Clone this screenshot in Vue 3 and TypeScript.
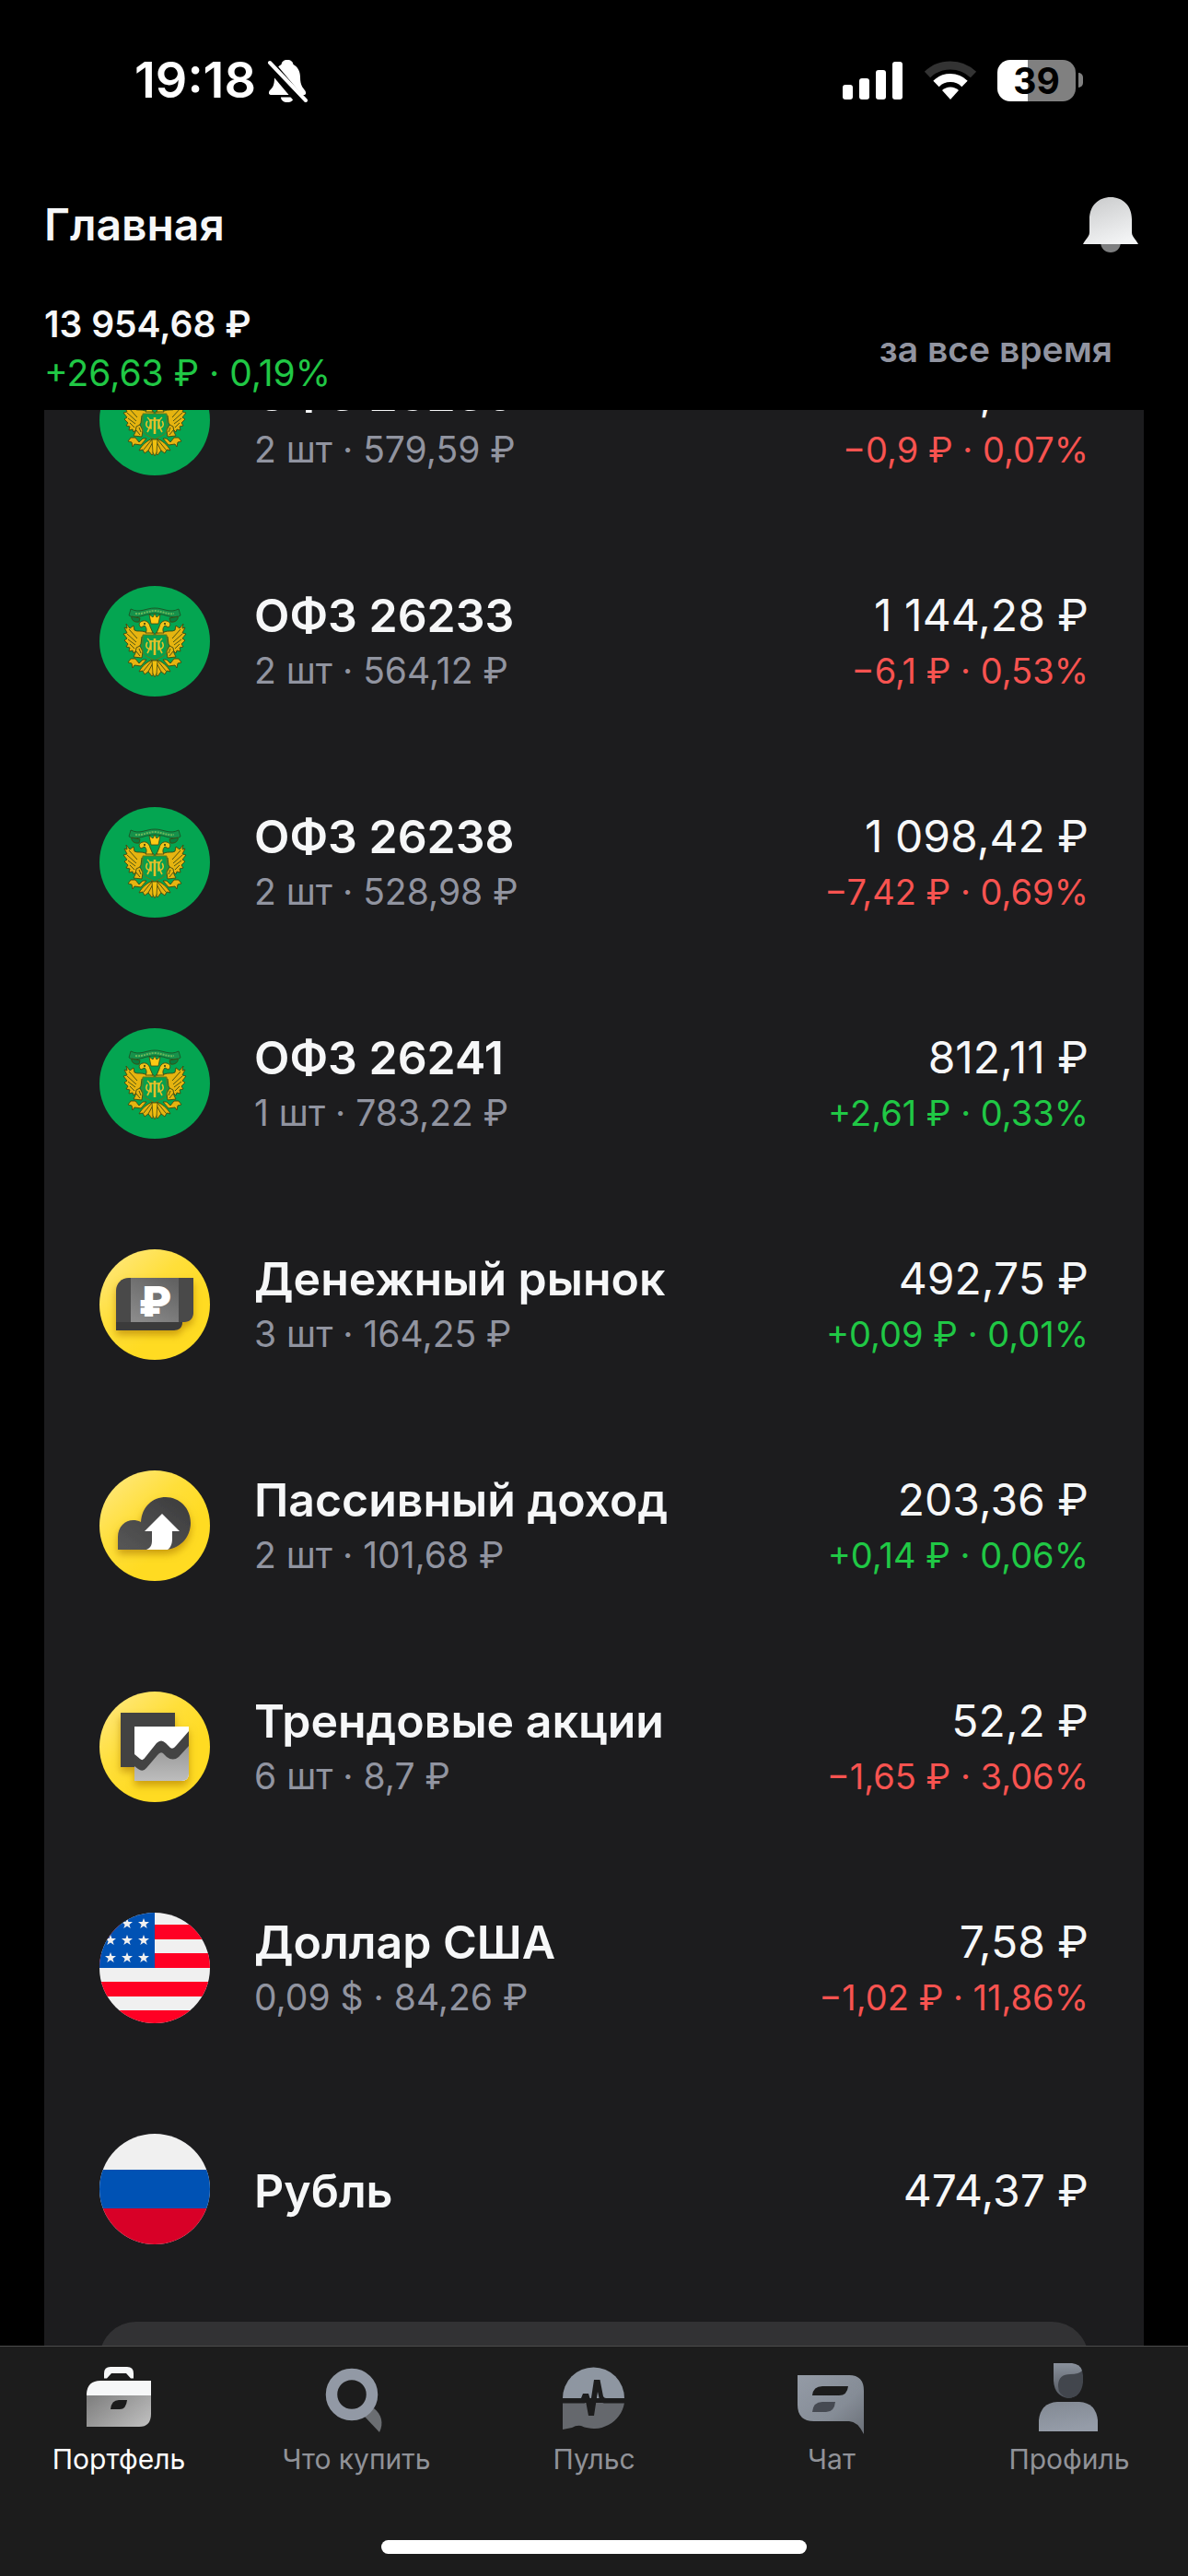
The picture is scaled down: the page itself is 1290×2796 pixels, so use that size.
<script setup lang="ts">
import { onMounted, ref } from 'vue'

type Trend = 'up' | 'down'
type Logo = 'ofz' | 'money' | 'passive' | 'trend' | 'usd' | 'rub'

interface Position {
  logo: Logo
  name: string
  details?: string
  value: string
  change?: string
  trend?: Trend
}

interface Tab {
  id: string
  label: string
}

const positions: Position[] = [
  { logo: 'ofz', name: 'ОФЗ 26230', details: '2 шт · 579,59 ₽', value: '1 210,32 ₽', change: '−0,9 ₽ · 0,07%', trend: 'down' },
  { logo: 'ofz', name: 'ОФЗ 26233', details: '2 шт · 564,12 ₽', value: '1 144,28 ₽', change: '−6,1 ₽ · 0,53%', trend: 'down' },
  { logo: 'ofz', name: 'ОФЗ 26238', details: '2 шт · 528,98 ₽', value: '1 098,42 ₽', change: '−7,42 ₽ · 0,69%', trend: 'down' },
  { logo: 'ofz', name: 'ОФЗ 26241', details: '1 шт · 783,22 ₽', value: '812,11 ₽', change: '+2,61 ₽ · 0,33%', trend: 'up' },
  { logo: 'money', name: 'Денежный рынок', details: '3 шт · 164,25 ₽', value: '492,75 ₽', change: '+0,09 ₽ · 0,01%', trend: 'up' },
  { logo: 'passive', name: 'Пассивный доход', details: '2 шт · 101,68 ₽', value: '203,36 ₽', change: '+0,14 ₽ · 0,06%', trend: 'up' },
  { logo: 'trend', name: 'Трендовые акции', details: '6 шт · 8,7 ₽', value: '52,2 ₽', change: '−1,65 ₽ · 3,06%', trend: 'down' },
  { logo: 'usd', name: 'Доллар США', details: '0,09 $ · 84,26 ₽', value: '7,58 ₽', change: '−1,02 ₽ · 11,86%', trend: 'down' },
  { logo: 'rub', name: 'Рубль', value: '474,37 ₽' },
]

const tabs: Tab[] = [
  { id: 'portfolio', label: 'Портфель' },
  { id: 'search', label: 'Что купить' },
  { id: 'pulse', label: 'Пульс' },
  { id: 'chat', label: 'Чат' },
  { id: 'profile', label: 'Профиль' },
]

const stars = [12, 30, 49].flatMap((y) => [12, 30, 48].map((x) => ({ x, y })))
const redStripes = [13, 44, 75, 106]

const activeTab = ref('portfolio')
const scroller = ref<HTMLElement | null>(null)

onMounted(() => {
  if (scroller.value) scroller.value.scrollTop = 109
})
</script>

<template>
  <div class="app">
    <svg class="defs" width="0" height="0" aria-hidden="true">
      <defs>
        <linearGradient id="gold-disc" x1="0" y1="0" x2="0.6" y2="0.7">
          <stop offset="0" stop-color="#ffe98a" />
          <stop offset="0.6" stop-color="#ffdf3a" />
          <stop offset="1" stop-color="#ffdb22" />
        </linearGradient>
        <linearGradient id="grey-band" x1="0.8" y1="0" x2="0.2" y2="1">
          <stop offset="0" stop-color="#626262" />
          <stop offset="1" stop-color="#8a8a8a" />
        </linearGradient>
        <linearGradient id="cloud" x1="1" y1="0" x2="0" y2="1">
          <stop offset="0" stop-color="#3c3c3d" />
          <stop offset="1" stop-color="#565656" />
        </linearGradient>
        <linearGradient id="chart-low" x1="0" y1="0" x2="0" y2="1">
          <stop offset="0" stop-color="#8c8c8c" />
          <stop offset="1" stop-color="#bdbdbd" />
        </linearGradient>
        <linearGradient id="bell" x1="0.2" y1="0" x2="0.6" y2="1">
          <stop offset="0" stop-color="#cbcccd" />
          <stop offset="1" stop-color="#f3f4f5" />
        </linearGradient>
        <linearGradient id="case" x1="0" y1="0.2" x2="1" y2="0.8">
          <stop offset="0" stop-color="#828282" />
          <stop offset="1" stop-color="#bcbcbc" />
        </linearGradient>
        <linearGradient id="steel" x1="0" y1="0" x2="0.3" y2="1">
          <stop offset="0" stop-color="#828993" />
          <stop offset="1" stop-color="#959ca8" />
        </linearGradient>
        <linearGradient id="hair" x1="0" y1="0" x2="0" y2="1">
          <stop offset="0" stop-color="#8a919c" />
          <stop offset="1" stop-color="#50555d" />
        </linearGradient>
        <linearGradient id="steel-chat" x1="0" y1="0" x2="1" y2="1">
          <stop offset="0" stop-color="#949ba6" />
          <stop offset="0.6" stop-color="#858c96" />
          <stop offset="1" stop-color="#6b7078" />
        </linearGradient>
        <clipPath id="disc"><circle cx="60" cy="60" r="60" /></clipPath>
        <filter id="shadow" x="-30%" y="-30%" width="160%" height="170%">
          <feDropShadow dx="0" dy="5" stdDeviation="4" flood-color="#a87400" flood-opacity="0.6" />
        </filter>
        <!-- left half of the double-headed eagle, mirrored for the right half -->
        <g id="eagle-half" stroke="#3f4a12" stroke-width="0.9" stroke-linejoin="round">
          <path d="M59 51 L50 50 C45 48 41 50 38 48 L37 43 L33 46 L29 41 L30 46 L27 45 L30 51 L26 52 L30 57 L27 59 L31 63 L29 66 L33 67 L32 71 L36 70 L37 73 C40 70 43 67 45 63 L46 55 L59 55Z" fill="#e6b410" />
          <path d="M32 47 L41 57 M30 52 L40 61 M31 58 L39 64 M33 63 L38 68" fill="none" />
          <path d="M45 45 C42 42 43 39 47 38 C51 37 54 40 55 44 L58 51 L50 51 C52 48 51 45 49 43Z" fill="#f0c419" />
          <circle cx="49" cy="41" r="1" fill="#24330f" stroke="none" />
          <path d="M40 67 L44 65 L47 71 L46 78 L37 77 L39 73Z" fill="#e6b410" />
          <path d="M40 71 L44 76 M43 68 L45 73" fill="none" />
          <path d="M34 79 L39 79 L43 84 L47 80 L51 80 L45 87 L38 86 L36 89 L35 84 L31 83Z" fill="#e6b410" />
          <path d="M35 33 C34 36 37 40 43 39 L44 35Z" fill="#0a7d3e" />
          <path d="M58 80 C52 82 46 87 43 93 L47 92 L49 96 L53 93 L57 98 L60 94Z" fill="#e6b410" />
          <path d="M57 81 L48 92 M59 82 L53 93 M60 82 L58 96" fill="none" />
        </g>
      </defs>
    </svg>

    <div class="status">
      <div class="status-side">
        <span class="clock">19:18</span>
        <svg class="muted" width="44" height="48" viewBox="0 0 44 48" aria-label="Без звука">
          <path d="M22 2 C26 2 28 4 28.500 7 C34 10 36 15 36 21 C36 30 39 32 41 35 C43 38 42 40 40 40 H5 C2 40 1 38 3 35 C6 32 8 30 8 21 C8 15 10 10 15.500 7 C16 4 18 2 22 2Z" fill="#fff" />
          <path d="M15 42.500 H29 C29 46 26 48 22 48 C18 48 15 46 15 42.500Z" fill="#fff" />
          <path d="M-2 1 L40 51" stroke="#000" stroke-width="11" />
          <path d="M3 5 L42 46" stroke="#fff" stroke-width="4" stroke-linecap="round" />
        </svg>
      </div>
      <div class="status-side">
        <svg width="66" height="42" viewBox="0 0 66 42" aria-label="Сигнал сети">
          <g fill="#fff">
            <rect x="0" y="26" width="11" height="16" rx="3" />
            <rect x="18" y="19" width="11" height="23" rx="3" />
            <rect x="36" y="10" width="11" height="32" rx="3" />
            <rect x="54" y="1" width="11" height="41" rx="3" />
          </g>
        </svg>
        <svg class="wifi" width="58" height="42" viewBox="0 0 58 42" aria-label="Wi-Fi">
          <g fill="none" stroke-width="9">
            <path d="M4 15 A36 36 0 0 1 54 15" stroke="#333" />
            <path d="M13.500 25 A22 22 0 0 1 44.500 25" stroke="#fff" />
          </g>
          <path d="M20 32 A13 13 0 0 1 38 32 L29 42Z" fill="#fff" />
        </svg>
        <div class="battery"><span class="battery-body">39</span><i class="battery-cap"></i></div>
      </div>
    </div>

    <header class="top">
      <h1>Главная</h1>
      <button class="bell" type="button" aria-label="Уведомления">
        <svg width="60" height="60" viewBox="0 0 60 60">
          <path d="M19 48 H41 C41 56 36 60 30 60 C24 60 19 56 19 48Z" fill="#7e7f80" />
          <path d="M30 0 C43 0 53 9 53 24 V38 C53 43 57 45 60 51 H0 C3 45 7 43 7 38 V24 C7 9 17 0 30 0Z" fill="url(#bell)" />
        </svg>
      </button>
    </header>

    <section class="summary">
      <div>
        <div class="total">13 954,68 ₽</div>
        <div class="profit">+26,63 ₽ · 0,19%</div>
      </div>
      <button class="period" type="button">за все время</button>
    </section>

    <main ref="scroller" class="scroller">
      <div class="card">
        <ul class="positions">
          <li v-for="item in positions" :key="item.name" class="position">
            <svg class="logo" viewBox="0 0 120 120" aria-hidden="true">
              <g clip-path="url(#disc)">
                <template v-if="item.logo === 'ofz'">
                  <rect width="120" height="120" fill="#04a551" />
                  <path d="M34 25 C44 30 50 24 60 24 C70 24 76 30 86 25 L88 32 L84 34 C74 34 70 30 60 30 C50 30 46 34 36 34 L32 32Z" fill="#16924b" stroke="#195b29" stroke-width="1" />
                  <path d="M39 30 C48 31 52 27 60 27 C68 27 72 31 81 30" fill="none" stroke="#6bb85a" stroke-width="2" stroke-dasharray="2 1" />
                  <use href="#eagle-half" />
                  <use href="#eagle-half" transform="matrix(-1 0 0 1 120 0)" />
                  <path d="M56 41 H64 L66 31 L62 34 L60 30 L58 34 L54 31Z" fill="#ffc914" stroke="#3f4a12" stroke-width="0.8" />
                  <path d="M47 53 H73 V71 C73 76 64 78 60 81 C56 78 47 76 47 71Z" fill="#07a04d" stroke="#68791a" stroke-width="1" />
                  <g fill="none" stroke="#e4c02a" stroke-width="1.600">
                    <path d="M52 57 C57 61 56 66 52 73 M68 57 C63 61 64 66 68 73 M52 61 C49 66 52 69 57 69 M68 61 C71 66 68 69 63 69 M56 59 V68 M64 59 V68 M55 60 H65" />
                    <path d="M60 57 V75" stroke-width="2.600" />
                  </g>
                  <path d="M57 81 H63 L62 95 L60 99 L58 95Z" fill="#f0c010" stroke="#3f4a12" stroke-width="0.800" />
                </template>

                <template v-else-if="item.logo === 'money'">
                  <rect width="120" height="120" fill="url(#gold-disc)" />
                  <g filter="url(#shadow)">
                    <path d="M18 45 H90 V80 C90 85 86 88 81 88 H18Z" fill="#3b3b3b" />
                    <path d="M32 31 H102 V69 C102 75 98 79 92 79 H18 V45 C18 37 24 31 32 31Z" fill="#484848" />
                  </g>
                  <rect x="34" y="31" width="52" height="48" fill="url(#grey-band)" />
                  <text x="60" y="73" class="logo-sign">₽</text>
                </template>

                <template v-else-if="item.logo === 'passive'">
                  <rect width="120" height="120" fill="url(#gold-disc)" />
                  <path d="M20 86 V72 C20 58 33 50 45 56 C46 39 58 29 72 29 C87 29 99 41 99 57 C99 73 87 86 70 86Z" fill="url(#cloud)" filter="url(#shadow)" />
                  <path d="M68 47 L87 66 H79 V74 C79 80 77 84 74 86 H51 C55 84 57 82 57 76 V66 H49Z" fill="#fff" />
                </template>

                <template v-else-if="item.logo === 'trend'">
                  <rect width="120" height="120" fill="url(#gold-disc)" />
                  <g filter="url(#shadow)">
                    <rect x="23" y="23" width="59" height="59" fill="#434343" />
                    <path d="M38 38 H97 V89 C97 94 94 97 89 97 H38Z" fill="#fff" />
                  </g>
                  <path d="M38 75 L46 80 L64 58 H69 L80 68 L97 48 V89 C97 94 94 97 89 97 H38Z" fill="url(#chart-low)" />
                  <path d="M38 68 L44 73 Q47 76 50 71 L62 56 Q67 51 72 56 L77 61 Q80 63 83 59 L97 43 V59 L86 71 Q80 76 73 71 L69 67 Q66 65 63 69 L51 83 Q47 88 42 84 L38 81Z" fill="#434343" />
                </template>

                <template v-else-if="item.logo === 'usd'">
                  <rect width="120" height="120" fill="#f0f0f0" />
                  <rect v-for="y in redStripes" :key="y" x="0" :y="y" width="120" height="16" fill="#ff0024" />
                  <rect width="60" height="60" fill="#0052b4" />
                  <path
                    v-for="star in stars"
                    :key="`${star.x}-${star.y}`"
                    :transform="`translate(${star.x} ${star.y})`"
                    d="M0 -6 L1.500 -2 H6 L2.400 1 L3.700 5 L0 2.500 L-3.700 5 L-2.400 1 L-6 -2 H-1.500Z"
                    fill="#f0f0f0"
                  />
                </template>

                <template v-else>
                  <rect width="120" height="120" fill="#f0f0f0" />
                  <rect y="39" width="120" height="42" fill="#0052b4" />
                  <rect y="81" width="120" height="39" fill="#d80027" />
                </template>
              </g>
            </svg>
            <div class="about">
              <div class="name">{{ item.name }}</div>
              <div v-if="item.details" class="details">{{ item.details }}</div>
            </div>
            <div class="worth">
              <div class="value">{{ item.value }}</div>
              <div v-if="item.change" class="change" :class="item.trend">{{ item.change }}</div>
            </div>
          </li>
        </ul>
        <button class="more" type="button" aria-label="Ещё"></button>
      </div>
    </main>

    <nav class="tabbar">
      <div class="tabs">
        <button
          v-for="tab in tabs"
          :key="tab.id"
          type="button"
          class="tab"
          :class="{ active: tab.id === activeTab }"
          @click="activeTab = tab.id"
        >
          <svg width="84" height="84" viewBox="0 0 84 84" aria-hidden="true">
            <template v-if="tab.id === 'portfolio'">
              <path d="M26 19.500 V14 Q26 7 33 7 H51 Q58 7 58 14 V19.500 H55 L50 14 H34 L29 19.500Z" fill="#f6f7f8" />
              <path d="M7 38 V36 Q8 22 22 22 H77 V38Z" fill="#f6f7f8" />
              <path d="M7 38 H77 V58 Q77 72 64 72 H7Z" fill="url(#case)" />
              <path d="M33 53 Q34 43 42 43 H51 Q50 53 43 53Z" fill="#1c1c1c" />
            </template>
            <template v-else-if="tab.id === 'search'">
              <path d="M51 61 L61 52 C69 58 72 68 67 78 Z" fill="#6b6e72" />
              <circle cx="37" cy="37" r="22" fill="none" stroke="#9299a5" stroke-width="12.500" />
            </template>
            <template v-else-if="tab.id === 'pulse'">
              <path d="M8 41 A33.500 33.500 0 0 1 75 41Z" fill="#8e96a1" />
              <path d="M8 46 H75 A33.500 33.500 0 0 1 28 71 Q23 70 18 73 L8 75Z" fill="#65686d" />
              <path d="M6 41 H28 L30 36 H36 L38.500 44 L42 21 H48.500 L52 39 Q53 41 55 41 H78 V46.500 H53 Q49 46 48 43 L46 34 L42 60 H36 L33 44 L32 46.500 H6Z" fill="#1c1c1c" />
            </template>
            <template v-else-if="tab.id === 'chat'">
              <path d="M5 16 H61 Q77 16 77 33 V80 Q70 66 61 66 H23 Q5 66 5 48Z" fill="url(#steel-chat)" />
              <path d="M21 38 Q22 28 32 28 H60 Q59 38 50 38Z" fill="#1c1c1c" />
              <path d="M21 56 Q22 45 32 45 H46 Q45 56 36 56Z" fill="#464a52" />
            </template>
            <template v-else>
              <path d="M25 3 H45 Q54 4 56 11 V24 Q55 40 41 41 Q26 39 25 22Z" fill="url(#hair)" />
              <path d="M30 26 Q31 15 43 15 Q53 15 56 11 L57 16 V24 Q55 40 41 41 Q30 38 30 28Z" fill="#42464d" />
              <path d="M9 77 V65 Q11 46 29 45 H53 Q71 46 73 65 V77Z" fill="url(#steel)" />
            </template>
          </svg>
          <span>{{ tab.label }}</span>
        </button>
      </div>
      <div class="home-indicator"></div>
    </nav>
  </div>
</template>

<style>
body {
  margin: 0;
  background: #000;
}
</style>

<style scoped>
.app {
  display: flex;
  flex-direction: column;
  height: 100vh;
  overflow: hidden;
  background: #000;
  color: #f6f7f8;
  font-family: Inter, "Liberation Sans", sans-serif;
}

button {
  padding: 0;
  border: 0;
  background: none;
  color: inherit;
  font: inherit;
}

svg {
  display: block;
}

.defs {
  position: absolute;
}

.status {
  display: flex;
  flex: none;
  align-items: center;
  justify-content: space-between;
  height: 174px;
  padding: 0 114px 0 146px;
  color: #fff;
}

.status-side {
  display: flex;
  align-items: center;
}

.clock {
  font-size: 54px;
  font-weight: 600;
  line-height: 60px;
}

.muted {
  margin-left: 12px;
}

.wifi {
  margin: 0 22px;
}

.battery {
  display: flex;
  align-items: center;
  gap: 3px;
}

.battery-body {
  width: 85px;
  border-radius: 14px;
  background: linear-gradient(90deg, #fff 39%, #808080 39%);
  color: #000;
  font-size: 39px;
  font-weight: 700;
  line-height: 45px;
  text-align: center;
}

.battery-cap {
  width: 5px;
  height: 16px;
  border-radius: 0 5px 5px 0;
  background: #808080;
}

.top {
  display: flex;
  flex: none;
  align-items: center;
  justify-content: space-between;
  height: 140px;
  padding: 0 54px 0 48px;
}

h1 {
  margin: 0;
  font-size: 48px;
  font-weight: 600;
  line-height: 60px;
}

.summary {
  display: flex;
  flex: none;
  align-items: center;
  justify-content: space-between;
  padding: 11px 82px 14px 48px;
  font-size: 39px;
  line-height: 53px;
}

.total,
.period {
  font-weight: 600;
}

.profit,
.up {
  color: #20c845;
}

.down {
  color: #f75350;
}

.period {
  color: #9194a0;
}

.scroller {
  flex: 1;
  min-height: 0;
  overflow-y: auto;
  scrollbar-width: none;
  padding: 0 48px;
}

.card {
  padding-bottom: 60px;
  background: #1c1c1e;
}

.positions {
  margin: 0;
  padding: 0;
  list-style: none;
}

.position {
  display: flex;
  align-items: center;
  height: 240px;
  padding: 0 60px;
}

.logo {
  flex: none;
  width: 120px;
  height: 120px;
}

.logo-sign {
  fill: #fff;
  font-size: 46px;
  font-weight: 900;
  text-anchor: middle;
}

.about {
  flex: 1;
  padding: 3px 0 0 48px;
}

.worth {
  padding-top: 3px;
  text-align: right;
}

.name,
.value {
  line-height: 60px;
}

.name {
  font-size: 50px;
  font-weight: 600;
}

.value {
  font-size: 48px;
}

.details,
.change {
  line-height: 60px;
}

.details {
  color: #9194a0;
  font-size: 39px;
}

.change {
  font-size: 38px;
}

.more {
  display: block;
  width: calc(100% - 120px);
  height: 132px;
  margin: 24px 60px 0;
  border-radius: 40px;
  background: #323234;
}

.tabbar {
  flex: none;
  border-top: 1px solid #4b4b4b;
  background: #1c1c1c;
}

.tabs {
  display: grid;
  grid-template-columns: repeat(5, 1fr);
  padding-top: 15px;
}

.tab {
  display: flex;
  flex-direction: column;
  align-items: center;
  gap: 5px;
  color: #909298;
  font-size: 30px;
  line-height: 36px;
}

.tab.active {
  color: #fff;
}

.home-indicator {
  width: 462px;
  height: 15px;
  margin: 70px auto 24px;
  border-radius: 8px;
  background: #fff;
}
</style>
